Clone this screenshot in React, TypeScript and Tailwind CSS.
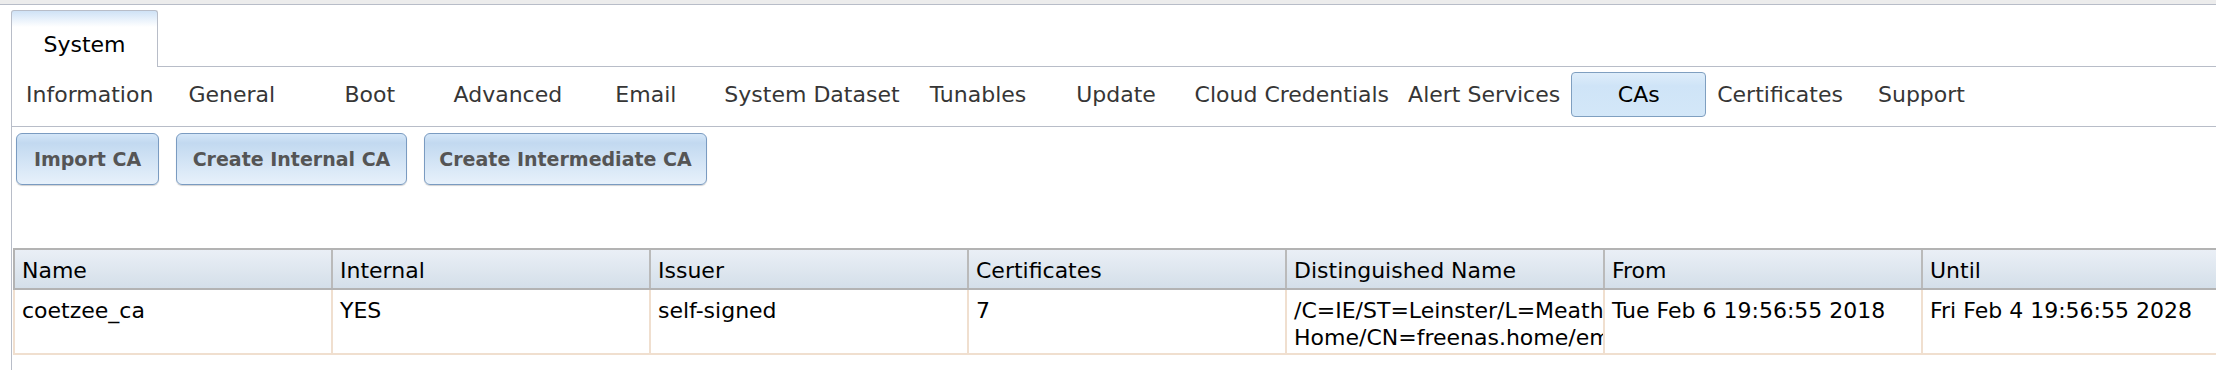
import React from 'react';

const navItems = [
  'Information',
  'General',
  'Boot',
  'Advanced',
  'Email',
  'System Dataset',
  'Tunables',
  'Update',
  'Cloud Credentials',
  'Alert Services',
  'CAs',
  'Certificates',
  'Support',
];

const actions = [
  { label: 'Import CA', width: 'w-[143px]' },
  { label: 'Create Internal CA', width: 'w-[231px]' },
  { label: 'Create Intermediate CA', width: 'w-[283px]' },
];

const columns = ['Name', 'Internal', 'Issuer', 'Certificates', 'Distinguished Name', 'From', 'Until'];

const font = { fontFamily: '"DejaVu Sans", Verdana, sans-serif' };

const App: React.FC = () => {
  return (
    <div className="w-[2216px] h-[370px] overflow-hidden bg-white text-[22px] leading-[27px] text-black" style={font}>
      {/* top strip */}
      <div className="h-[5px] bg-[#ececec] border-b border-[#b8bdc8]" />

      <div className="pt-[5px] flex flex-col h-[365px]">
        {/* tab strip */}
        <div className="flex h-[57px]">
          <div className="ml-[11px] w-[147px] h-[57px] border-t border-l border-r border-[#b8bdc8] rounded-t-[3px] bg-[linear-gradient(to_bottom,#cfe2f6_0px,#ffffff_16px)] pt-[20px] text-center">
            System
          </div>
          <div className="flex-1 border-b border-[#b8bdc8]" />
        </div>

        {/* panel */}
        <div className="ml-[11px] flex-1 border-l border-[#b8bdc8]">
          <div className="flex gap-[3px] pl-[6px] pt-[5px] pb-[9px] border-b border-[#b8bdc8]">
            {navItems.map((item) => {
              const active = item === 'CAs';
              return (
                <div
                  key={item}
                  className={
                    active
                      ? 'min-w-[135px] h-[45px] px-[7px] flex items-center justify-center whitespace-nowrap rounded-[4px] border border-[#7f9fc0] bg-[linear-gradient(to_bottom,#deedfa,#cfe4f7_30%,#d3e7f8)] text-black'
                      : 'min-w-[135px] h-[45px] px-[7px] flex items-center justify-center whitespace-nowrap border border-transparent text-[#363636]'
                  }
                >
                  {item}
                </div>
              );
            })}
          </div>

          {/* action buttons */}
          <div className="flex gap-[17px] pl-[4px] pt-[6px]">
            {actions.map((a) => (
              <button
                key={a.label}
                className={`${a.width} h-[52px] rounded-[6px] border border-[#7a9bc1] bg-[linear-gradient(to_bottom,#d4e6f8_0%,#c2d9f0_18%,#e7f1fb_100%)] shadow-[0_1px_1px_rgba(0,0,0,0.18)] text-[19px] font-bold text-[#555555] whitespace-nowrap`}
                style={font}
              >
                {a.label}
              </button>
            ))}
          </div>

          {/* grid */}
          <div className="mt-[63px] ml-[1px] w-[2230px]">
            <div className="grid grid-cols-[repeat(7,318px)] border-t-2 border-b-2 border-l-2 border-[#b3b3b3] bg-[linear-gradient(to_bottom,#eaeff6,#d4dfe9)]">
              {columns.map((c) => (
                <div key={c} className="pl-[7px] pt-[7px] pb-[4px] border-r-2 border-[#bababa] whitespace-nowrap overflow-hidden">
                  {c}
                </div>
              ))}
            </div>
            <div className="grid grid-cols-[repeat(7,318px)] border-b-2 border-l-2 border-[#f0dfcf]">
              <div className="pl-[7px] pt-[7px] pb-[2px] border-r-2 border-[#f0dfcf] h-[63px]">coetzee_ca</div>
              <div className="pl-[7px] pt-[7px] pb-[2px] border-r-2 border-[#f0dfcf]">YES</div>
              <div className="pl-[7px] pt-[7px] pb-[2px] border-r-2 border-[#f0dfcf]">self-signed</div>
              <div className="pl-[7px] pt-[7px] pb-[2px] border-r-2 border-[#f0dfcf]">7</div>
              <div className="pl-[7px] pt-[7px] pb-[2px] border-r-2 border-[#f0dfcf] overflow-hidden">
                <div className="whitespace-nowrap">/C=IE/ST=Leinster/L=Meath/O=Coetzee</div>
                <div className="whitespace-nowrap">Home/CN=freenas.home/emailAddress=admin@freenas.home</div>
              </div>
              <div className="pl-[7px] pt-[7px] pb-[2px] border-r-2 border-[#f0dfcf] whitespace-nowrap overflow-hidden">
                Tue Feb 6 19:56:55 2018
              </div>
              <div className="pl-[7px] pt-[7px] pb-[2px] border-r-2 border-[#f0dfcf] whitespace-nowrap overflow-hidden">
                Fri Feb 4 19:56:55 2028
              </div>
            </div>
          </div>
        </div>
      </div>
    </div>
  );
};

export default App;
